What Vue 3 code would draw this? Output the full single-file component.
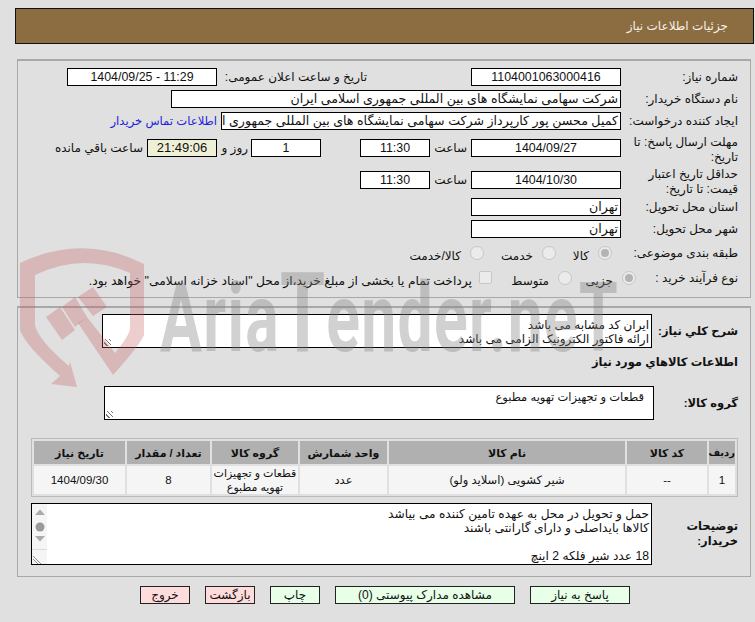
<template>
  <div class="page" dir="rtl">
    <div class="header">جزئیات اطلاعات نیاز</div>

    <div class="panel top-panel">
      <div class="row">
        <div class="label">شماره نیاز:</div>
        <div class="box w150 center">1104001063000416</div>
        <div class="label label-announce">تاریخ و ساعت اعلان عمومی:</div>
        <div class="box w150 center"><span dir="ltr">1404/09/25 - 11:29</span></div>
      </div>
      <div class="row">
        <div class="label">نام دستگاه خریدار:</div>
        <div class="box w450">شرکت سهامی نمایشگاه های بین المللی جمهوری اسلامی ایران</div>
      </div>
      <div class="row">
        <div class="label">ایجاد کننده درخواست:</div>
        <div class="box w400">کمیل محسن پور کارپرداز شرکت سهامی نمایشگاه های بین المللی جمهوری اسلامی ایران</div>
        <a class="contact">اطلاعات تماس خریدار</a>
      </div>
      <div class="row row-tall first-tall">
        <div class="label two-line">مهلت ارسال پاسخ: تا<br />تاریخ:</div>
        <div class="box w150 center">1404/09/27</div>
        <div class="hour">ساعت</div>
        <div class="box w70 center">11:30</div>
        <div class="box w70 center days">1</div>
        <div class="day-text">روز و</div>
        <div class="box w70 center timer">21:49:06</div>
        <div class="left-text">ساعت باقي مانده</div>
      </div>
      <div class="row row-tall">
        <div class="label two-line">حداقل تاریخ اعتبار<br />قیمت: تا تاریخ:</div>
        <div class="box w150 center">1404/10/30</div>
        <div class="hour">ساعت</div>
        <div class="box w70 center">11:30</div>
      </div>
      <div class="row">
        <div class="label">استان محل تحویل:</div>
        <div class="box w150">تهران</div>
      </div>
      <div class="row">
        <div class="label">شهر محل تحویل:</div>
        <div class="box w150">تهران</div>
      </div>
      <div class="row row-opts">
        <div class="label">طبقه بندی موضوعی:</div>
        <div class="opts opts-kind">
          <span class="radio checked"></span><span class="opt-text t-kala">کالا</span>
          <span class="radio"></span><span class="opt-text t-khedmat">خدمت</span>
          <span class="radio"></span><span class="opt-text">کالا/خدمت</span>
        </div>
      </div>
      <div class="row row-opts">
        <div class="label label-proc">نوع فرآیند خرید :</div>
        <div class="opts">
          <span class="radio checked"></span><span class="opt-text t-jozi">جزیی</span>
          <span class="radio"></span><span class="opt-text t-motavaset">متوسط</span>
          <span class="check"></span><span class="opt-text t-pay">پرداخت تمام یا بخشی از مبلغ خرید،از محل "اسناد خزانه اسلامی" خواهد بود.</span>
        </div>
      </div>
    </div>

    <div class="panel bottom-panel">
      <div class="row row-summary">
        <div class="label strong w86">شرح کلي نياز:</div>
        <div class="area area-summary">
          ایران کد مشابه می باشد<br />ارائه فاکتور الکترونیک الزامی می باشد
          <span class="grip"></span>
        </div>
      </div>
      <div class="section-title">اطلاعات کالاهاي مورد نياز</div>
      <div class="row row-group">
        <div class="label strong w84">گروه کالا:</div>
        <div class="area area-group">
          قطعات و تجهیزات تهویه مطبوع
          <span class="grip"></span>
        </div>
      </div>

      <table class="items">
        <colgroup>
          <col v-for="w in colWidths" :key="w.id" :style="{ width: w.px + 'px' }" />
        </colgroup>
        <thead>
          <tr>
            <th v-for="h in headers" :key="h">{{ h }}</th>
          </tr>
        </thead>
        <tbody>
          <tr>
            <td>1</td>
            <td>--</td>
            <td>شیر کشویی (اسلاید ولو)</td>
            <td>عدد</td>
            <td class="group-cell">قطعات و تجهیزات<br />تهویه مطبوع</td>
            <td>8</td>
            <td>1404/09/30</td>
          </tr>
        </tbody>
      </table>

      <div class="row row-notes">
        <div class="label strong w86 notes-label">توضیحات<br />خریدار:</div>
        <div class="area area-notes">
          حمل و تحویل در محل به عهده تامین کننده می بیاشد<br />
          کالاها بایداصلی و دارای گارانتی باشند<br />
          <br />
          18 عدد شیر فلکه 2 اینچ
          <div class="scroller">
            <svg width="15" height="60" viewBox="0 0 15 60">
              <path d="M3 11 L8 5.5 L13 11 Z" fill="#aaa" />
              <circle cx="8" cy="23" r="4.5" fill="#999" />
              <path d="M3 32 L13 32 L8 37.5 Z" fill="#aaa" />
              <path d="M0 45.5 H15" stroke="#ddd" />
              <path d="M1 52 L9 60 M1 55 L6 60" stroke="#777" stroke-width="0.8" />
            </svg>
          </div>
        </div>
      </div>
    </div>

    <div class="actions">
      <button class="btn go w100">پاسخ به نیاز</button>
      <button class="btn go w180">مشاهده مدارک پیوستی (0)</button>
      <button class="btn go">چاپ</button>
      <button class="btn stop">بازگشت</button>
      <button class="btn stop">خروج</button>
    </div>

    <div class="watermark">
      <svg class="shield" width="140" height="150" viewBox="15 245 140 150">
        <path class="mark"
          d="M20 263 Q83 233 144 264 L144 335 Q140 345 113 375 L78 323 L87 317 L115 353 Q130 335 130 328 L130 273 Q83 252 35 275 L35 325 Q38 340 69 366 L70 362 L77 387 L51 384 L60 376 Q25 345 20 330 Z" />
        <path class="mark" d="M46 317 L60 307 L75 330 L62 340 Z" />
        <path class="mark" d="M62 307 L75 297 L87 317 L75 327 Z" />
        <path class="mark" d="M78 297 L93 287 L107 307 L93 316 Z" />
      </svg>
      <div class="brand">Aria<span class="big">T</span>ender.neT</div>
    </div>
  </div>
</template>

<script setup>
const headers = ['ردیف', 'کد کالا', 'نام کالا', 'واحد شمارش', 'گروه کالا', 'تعداد / مقدار', 'تاریخ نیاز']
const colWidths = [26, 80, 236, 87, 86, 83, 91].map((px, id) => ({ id, px }))
</script>

<style>
html,
body {
  margin: 0;
  background: #e0e0e0;
  overflow: hidden;
}
</style>

<style scoped>
.page {
  position: relative;
  width: 755px;
  height: 622px;
  box-sizing: border-box;
  padding: 8px 1px 0 15px;
  background: #e0e0e0;
  color: #111;
  font-family: "Liberation Sans", "DejaVu Sans", sans-serif;
  font-size: 12px;
  line-height: 14px;
  overflow: hidden;
}
.header {
  height: 36px;
  box-sizing: border-box;
  border: 1px solid #111;
  background: #8c6d42;
  color: #f4f0e8;
  line-height: 34px;
  padding-right: 25px;
}
.panel {
  margin: 15px 3px 0 2px;
  box-sizing: border-box;
  border: 1px solid #a8a8a8;
  border-width: 2px 1px 1px 1px;
  padding-right: 12px;
}
.top-panel {
  height: 239px;
  padding-top: 7px;
}
.bottom-panel {
  height: 271px;
  margin-top: 8px;
  padding-top: 6px;
}
.row {
  display: flex;
  align-items: center;
  height: 18px;
  margin-bottom: 4px;
}
.row-tall {
  margin-bottom: 14px;
}
.first-tall {
  margin-top: 9px;
}
.row-tall + .row-tall {
  margin-bottom: 9px;
}
.label {
  width: 117px;
  flex: none;
}
.two-line {
  line-height: 15px;
  white-space: nowrap;
  padding-top: 4px;
}
.box {
  flex: none;
  height: 18px;
  box-sizing: border-box;
  border: 1px solid #000;
  background: #fff;
  font-size: 12.6px;
  line-height: 16px;
  padding: 0 2px;
  white-space: nowrap;
  overflow: hidden;
}
.center {
  text-align: center;
  font-size: 12.4px;
}
.w70 { width: 70px; }
.w150 { width: 150px; }
.w400 { width: 400px; }
.w450 { width: 450px; }
.label-announce {
  width: 150px;
  margin-right: 104px;
}
.contact {
  margin-right: 4px;
  color: #2222dd;
  font-size: 11.6px;
  white-space: nowrap;
}
.hour {
  width: 37px;
  margin-right: 4px;
}
.days {
  margin-right: 39px;
}
.day-text {
  width: 31px;
  margin-right: 3px;
}
.timer {
  background: #efefd6;
  font-size: 13px;
}
.left-text {
  margin-right: 4px;
  white-space: nowrap;
}
.row-opts {
  height: 16px;
  margin: 7px 0 9px;
}
.label-proc {
  width: 102px;
}
.opts {
  display: flex;
  align-items: center;
}
.opts-kind {
  margin-right: 9px;
}
.radio {
  flex: none;
  width: 14px;
  height: 14px;
  box-sizing: border-box;
  border: 1px solid #c6c6c6;
  border-radius: 50%;
  background: #ebebeb;
  position: relative;
}
.radio.checked::after {
  content: '';
  position: absolute;
  inset: 2px;
  border-radius: 50%;
  background: #b4b4b4;
}
.check {
  flex: none;
  width: 13px;
  height: 13px;
  box-sizing: border-box;
  border: 1px solid #c6c6c6;
  border-radius: 2px;
  background: #ebebeb;
  margin-top: -1px;
}
.opt-text {
  margin: 5px 9px 0 0;
  white-space: nowrap;
}
.t-kala { width: 33px; }
.t-khedmat { width: 49px; }
.t-jozi { width: 41px; }
.t-motavaset { width: 57px; }
.t-pay {
  margin-right: 7px;
  font-size: 12.3px;
}
.strong {
  font-size: 11.5px;
  font-weight: bold;
}
.w84 { width: 84px; }
.w86 { width: 86px; }
.area {
  position: relative;
  flex: none;
  box-sizing: border-box;
  border: 1px solid #000;
  background: #fff;
  padding: 0 2px;
  overflow: hidden;
}
.row-summary {
  height: 34px;
  margin-bottom: 0;
}
.area-summary {
  width: 550px;
  height: 34px;
  padding-top: 3px;
}
.section-title {
  margin-top: 7px;
  font-size: 11.5px;
  font-weight: bold;
  height: 14px;
}
.row-group {
  height: 34px;
  margin: 17px 0 0;
}
.area-group {
  width: 550px;
  height: 34px;
  padding: 3px 9px 0 0;
  font-size: 11.5px;
}
.grip {
  position: absolute;
  left: 1px;
  bottom: 1px;
  width: 7px;
  height: 7px;
  background: repeating-linear-gradient(45deg, transparent 0 2px, #777 2px 3px);
}
.items {
  width: 707px;
  margin: 18px 0 0;
  table-layout: fixed;
  border: 1px solid #bbb;
  border-collapse: separate;
  border-spacing: 2px;
  text-align: center;
}
.items th {
  height: 23px;
  padding: 0;
  background: #b0b0b0;
  font-size: 11px;
  font-weight: bold;
}
.items th:first-child {
  font-size: 10px;
}
.items td {
  height: 28px;
  padding: 0;
  background: #f5f5f5;
  font-size: 11.5px;
}
.items .group-cell {
  font-size: 11px;
  line-height: 14px;
  white-space: nowrap;
}
.row-notes {
  height: 62px;
  margin: 6px 0 0;
}
.notes-label {
  line-height: 15px;
}
.area-notes {
  width: 621px;
  height: 62px;
  padding-top: 3px;
  font-size: 12.2px;
}
.scroller {
  position: absolute;
  left: 0;
  top: 0;
  width: 15px;
  height: 60px;
  background: #f5f5f5;
}
.scroller svg {
  display: block;
}
.actions {
  display: flex;
  gap: 15px;
  margin-top: 9px;
  padding-right: 124px;
}
.btn {
  flex: none;
  width: 50px;
  height: 18px;
  box-sizing: border-box;
  border: 1px solid #222;
  padding: 0;
  color: #111;
  font: inherit;
  line-height: 16px;
}
.go {
  background: #e8ffe8;
}
.stop {
  background: #ffdcdc;
}
.w100 { width: 100px; }
.w180 { width: 180px; }

.watermark {
  position: absolute;
  inset: 0;
  pointer-events: none;
}
.shield {
  position: absolute;
  left: 15px;
  top: 245px;
}
.mark {
  fill: rgba(197, 90, 90, 0.3);
}
.brand {
  position: absolute;
  left: 160px;
  top: 258px;
  direction: ltr;
  font-family: Roboto, "Liberation Sans", sans-serif;
  font-weight: bold;
  font-size: 96px;
  line-height: 110px;
  letter-spacing: 2px;
  color: rgba(128, 128, 128, 0.36);
  white-space: nowrap;
  transform: scaleX(0.65);
  transform-origin: left top;
}
.big {
  font-size: 112px;
}
</style>
